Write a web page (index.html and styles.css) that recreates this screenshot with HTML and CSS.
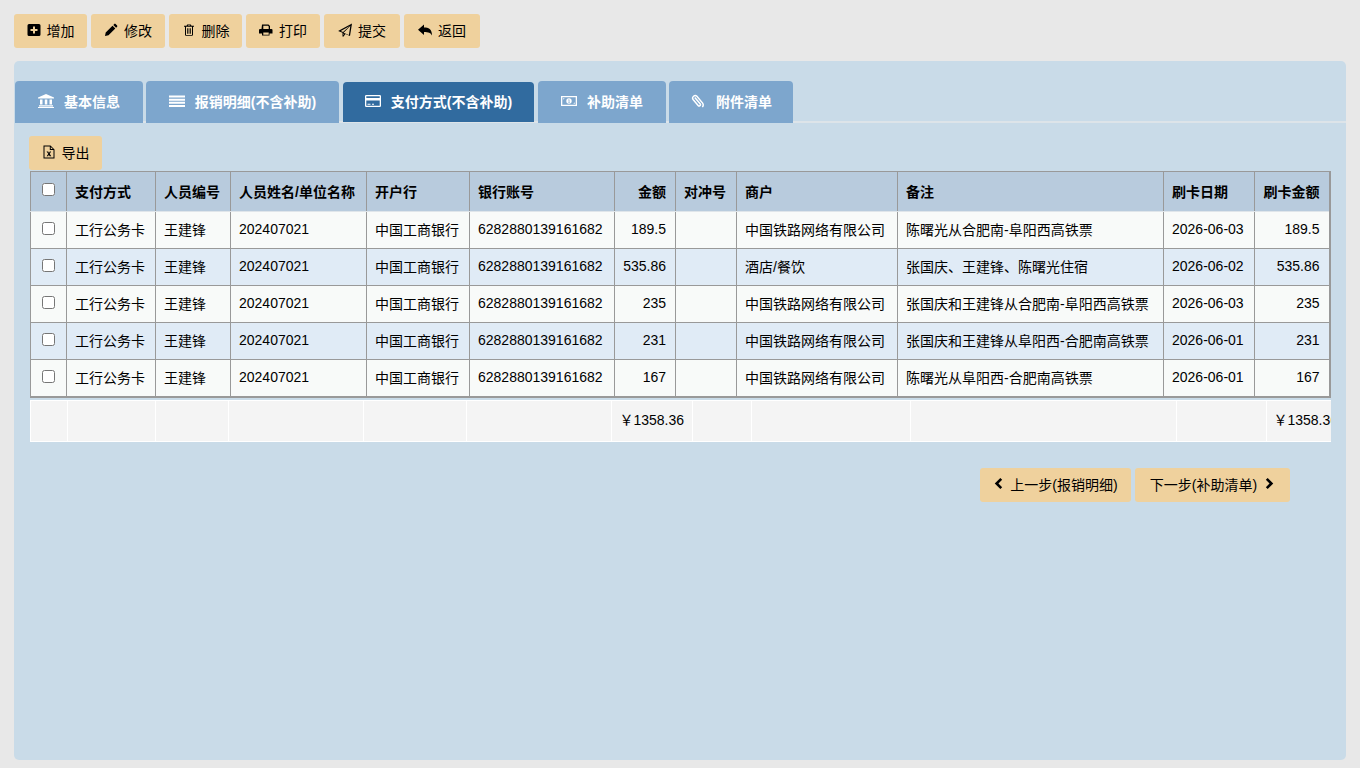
FILE: index.html
```html
<!DOCTYPE html>
<html lang="zh-CN">
<head>
    <meta charset="UTF-8">
    <title>支付方式</title>
    <link rel="stylesheet" href="styles.css">
</head>
<body>
    <!-- Toolbar -->
    <div class="toolbar">
        <button class="btn"><svg class="icon" viewBox="0 0 14 14"><path d="M2 1h10a1.500 1.500 0 0 1 1.500 1.500v9a1.500 1.500 0 0 1-1.500 1.500h-10a1.500 1.500 0 0 1-1.500-1.500v-9a1.500 1.500 0 0 1 1.500-1.500zM6 3.500v2.500h-2.500v2h2.500v2.500h2v-2.500h2.500v-2h-2.500v-2.500z" fill-rule="evenodd"/></svg>增加</button>
        <button class="btn"><svg class="icon" viewBox="0 0 14 14"><path d="M1 13l.7-3.500 6.800-6.800 2.800 2.800-6.800 6.800zM9.300 1.900l1-1a1 1 0 0 1 1.300 0l1.500 1.500a1 1 0 0 1 0 1.300l-1 1z"/></svg>修改</button>
        <button class="btn"><svg class="icon" viewBox="0 0 14 14"><path d="M5.200 1.500h3.600l.7 1.300h2.500v1h-1v8a1 1 0 0 1-1 1h-6a1 1 0 0 1-1-1v-8h-1v-1h2.500zM6 2.300l-.2.500h2.400l-.2-.5zM4 3.800v8.300h6v-8.300zM5 5.300h.8v5.500h-.8zM6.600 5.300h.8v5.500h-.8zM8.200 5.300h.8v5.500h-.8z" fill-rule="evenodd"/></svg>删除</button>
        <button class="btn"><svg class="icon" viewBox="0 0 14 14"><path d="M3 1.500h6.500l1.500 1.500v3h1.500a1 1 0 0 1 1 1v3.500h-3v2h-7.500v-2h-3v-3.500a1 1 0 0 1 1-1h1.500zM4.300 2.800v3.200h5.400v-2.500l-.7-.7zM4.300 9.500v2.200h5.400v-2.200z" fill-rule="evenodd"/></svg>打印</button>
        <button class="btn"><svg class="icon" viewBox="0 0 14 14"><path d="M14 .5l-2 12.500-4.500-1.900-2.200 2.600-.8-.2v-3.700l-4.400-1.900zM11.800 3l-9 5 2.200 1zM12.300 3l-6.700 6.800 5.300 2.200zM5.300 10.700v1.300l.9-1z" fill-rule="evenodd"/></svg>提交</button>
        <button class="btn"><svg class="icon" viewBox="0 0 14 14"><path d="M6 1.500v3c4.500 0 8 1.500 8 8-1.200-2.800-3.500-3.600-8-3.600v3.100l-6-5.200z"/></svg>返回</button>
    </div>

    <div class="panel">
        <!-- Tabs -->
        <div class="tabs">
            <div class="tab tab-a"><svg class="icon tab-icon" viewBox="0 0 16 14"><path d="M8 0l8 3.500v1h-16v-1zM2 5.500h2.500v5h-2.500zM6.800 5.500h2.500v5h-2.500zM11.500 5.500h2.500v5h-2.500zM1 11.200h14v1.300h-14zM0 13h16v1h-16z"/></svg>基本信息</div>
            <div class="tab tab-b"><svg class="icon tab-icon" viewBox="0 0 16 14"><path d="M0 1.500h16v2h-16zM0 4.700h16v2h-16zM0 7.800h16v2h-16zM0 11h16v2h-16z"/></svg>报销明细(不含补助)</div>
            <div class="tab tab-c active"><svg class="icon tab-icon" viewBox="0 0 16 14"><path d="M1.300 1h13.400a1.300 1.300 0 0 1 1.300 1.300v9.400a1.300 1.300 0 0 1-1.300 1.300h-13.400a1.300 1.300 0 0 1-1.300-1.300v-9.400a1.300 1.300 0 0 1 1.300-1.300zM1.300 2.300v1.700h13.400v-1.700zM1.300 6.500v5.200h13.400v-5.200zM2.500 9.700h3v1h-3zM7 9.700h2v1h-2z" fill-rule="evenodd"/></svg>支付方式(不含补助)</div>
            <div class="tab tab-d"><svg class="icon tab-icon" viewBox="0 0 16 14"><path d="M0 2h16v10h-16zM1.300 3.300v7.400h13.400v-7.400zM8 4.300a2.700 2.700 0 1 1 0 5.400a2.700 2.700 0 1 1 0-5.400zM7.300 5.500v.7h.4v2h-.5v.6h1.700v-.6h-.5v-2.700zM2.200 4.200h1.500l-1.500 1.500zM13.800 9.800h-1.500l1.500-1.500z" fill-rule="evenodd"/></svg>补助清单</div>
            <div class="tab tab-e"><svg class="icon tab-icon clip" viewBox="0 0 14 14"><path d="M3.800 3.500l5.300 6.300a1.300 1.300 0 0 1-2 1.700l-5-6a2.500 2.500 0 0 1 3.800-3.200l5.700 6.800a3.400 3.400 0 0 1-.2 4"/></svg>附件清单</div>
        </div>

        <button class="btn btn-export"><svg class="icon" viewBox="0 0 14 14"><path d="M1.500 .5h7l4 4v9h-11zM2.500 1.500v11h9v-7.500h-3.700v-3.500zM8.800 2v2h2z" fill-rule="evenodd"/><path d="M4.500 6.500h1.700l.8 1.400.8-1.400h1.400l-1.500 2.200 1.600 2.500h-1.700l-.7-1.400-.8 1.400h-1.400l1.600-2.500z"/></svg>导出</button>

        <!-- Data table -->
        <table class="grid">
            <colgroup>
                <col class="c1"><col class="c2"><col class="c3"><col class="c4"><col class="c5"><col class="c6">
                <col class="c7"><col class="c8"><col class="c9"><col class="c10"><col class="c11"><col class="c12">
            </colgroup>
            <thead>
                <tr>
                    <th class="center"><input type="checkbox"></th>
                    <th>支付方式</th><th>人员编号</th><th>人员姓名/单位名称</th><th>开户行</th><th>银行账号</th>
                    <th class="num">金额</th><th>对冲号</th><th>商户</th><th>备注</th><th>刷卡日期</th><th class="num">刷卡金额</th>
                </tr>
            </thead>
            <tbody>
                <tr>
                    <td class="center"><input type="checkbox"></td>
                    <td>工行公务卡</td><td>王建锋</td><td>202407021</td><td>中国工商银行</td><td>6282880139161682</td>
                    <td class="num">189.5</td><td></td><td>中国铁路网络有限公司</td><td>陈曙光从合肥南-阜阳西高铁票</td><td>2026-06-03</td><td class="num">189.5</td>
                </tr>
                <tr>
                    <td class="center"><input type="checkbox"></td>
                    <td>工行公务卡</td><td>王建锋</td><td>202407021</td><td>中国工商银行</td><td>6282880139161682</td>
                    <td class="num">535.86</td><td></td><td>酒店/餐饮</td><td>张国庆、王建锋、陈曙光住宿</td><td>2026-06-02</td><td class="num">535.86</td>
                </tr>
                <tr>
                    <td class="center"><input type="checkbox"></td>
                    <td>工行公务卡</td><td>王建锋</td><td>202407021</td><td>中国工商银行</td><td>6282880139161682</td>
                    <td class="num">235</td><td></td><td>中国铁路网络有限公司</td><td>张国庆和王建锋从合肥南-阜阳西高铁票</td><td>2026-06-03</td><td class="num">235</td>
                </tr>
                <tr>
                    <td class="center"><input type="checkbox"></td>
                    <td>工行公务卡</td><td>王建锋</td><td>202407021</td><td>中国工商银行</td><td>6282880139161682</td>
                    <td class="num">231</td><td></td><td>中国铁路网络有限公司</td><td>张国庆和王建锋从阜阳西-合肥南高铁票</td><td>2026-06-01</td><td class="num">231</td>
                </tr>
                <tr>
                    <td class="center"><input type="checkbox"></td>
                    <td>工行公务卡</td><td>王建锋</td><td>202407021</td><td>中国工商银行</td><td>6282880139161682</td>
                    <td class="num">167</td><td></td><td>中国铁路网络有限公司</td><td>陈曙光从阜阳西-合肥南高铁票</td><td>2026-06-01</td><td class="num">167</td>
                </tr>
            </tbody>
        </table>

        <!-- Totals row, its last cell is cut off like the scrolling footer -->
        <div class="totals-wrap">
            <div class="totals">
                <div class="t1"></div><div class="t2"></div><div class="t3"></div><div class="t4"></div><div class="t5"></div><div class="t6"></div>
                <div class="t7">￥1358.36</div><div class="t8"></div><div class="t9"></div><div class="t10"></div><div class="t11"></div>
                <div class="t12">￥1358.36</div>
            </div>
        </div>

        <!-- Step buttons -->
        <div class="steps">
            <button class="btn btn-prev"><svg class="icon chev" viewBox="0 0 10 14"><path d="M7.500 1l2 2-4 4 4 4-2 2-6-6z"/></svg>上一步(报销明细)</button>
            <button class="btn btn-next">下一步(补助清单)<svg class="icon chev chev-r" viewBox="0 0 10 14"><path d="M2.500 1l-2 2 4 4-4 4 2 2 6-6z"/></svg></button>
        </div>
    </div>
</body>
</html>
```

FILE: styles.css
```css
* {
    box-sizing: border-box;
}
html, body {
    height: 100%;
}
body {
    margin: 0;
    padding: 14px 14px 8px;
    background-color: #e8e8e8;
    font-family: "Liberation Sans", "Noto Sans CJK SC", sans-serif;
    font-size: 14px;
    color: #000;
    overflow: hidden;
}

/* Buttons */
.toolbar {
    display: flex;
    gap: 4px;
    height: 34px;
    margin-bottom: 13px;
}
.btn {
    display: inline-flex;
    align-items: center;
    justify-content: center;
    height: 34px;
    padding: 0 0 2px;
    border: none;
    border-radius: 3px;
    background-color: #efd19d;
    font: inherit;
    color: #000;
}
.toolbar .btn:nth-child(1) { width: 73px; }
.toolbar .btn:nth-child(2) { width: 74px; }
.toolbar .btn:nth-child(3) { width: 73px; }
.toolbar .btn:nth-child(4) { width: 74px; }
.toolbar .btn:nth-child(5) { width: 76px; }
.toolbar .btn:nth-child(6) { width: 76px; }
.icon {
    width: 14px;
    height: 14px;
    margin-right: 6px;
    fill: #000;
    flex: none;
}

/* Panel and tabs */
.panel {
    height: 699px;
    padding: 20px 16px 0 1px;
    background-color: #c9dbe8;
    border-radius: 5px;
}
.tabs {
    display: flex;
    align-items: flex-start;
    height: 42px;
    border-bottom: 2px solid #dde4e9;
    margin-right: -16px;
}
.tab {
    display: flex;
    align-items: center;
    justify-content: center;
    height: 42px;
    padding-bottom: 3px;
    background-color: #7da6cd;
    border-radius: 4px 4px 0 0;
    color: #fff;
    font-weight: bold;
    flex: none;
}
.tab-icon {
    width: 16px;
    height: 14px;
    margin-right: 10px;
    fill: #fff;
}
.tab-a { width: 128px; margin-right: 3px; }
.tab-b { width: 193px; margin-right: 4px; }
.tab-c { width: 191px; margin-right: 4px; }
.tab-d { width: 128px; margin-right: 3px; }
.tab-e { width: 124px; }
.tab.active {
    height: 40px;
    margin-top: 1px;
    padding-bottom: 2px;
    background-color: #316b9f;
}
.clip {
    fill: none;
    stroke: #fff;
    stroke-width: 1.500;
}
.btn-export {
    display: flex;
    width: 73px;
    margin: 13px 0 0 14px;
}

/* Data table */
.grid {
    width: 1299px;
    margin: 1px 0 0 15px;
    table-layout: fixed;
    border-collapse: collapse;
    border: 2px solid #999;
    border-width: 1px 2px 2px 1px;
}
.c1 { width: 36px; }
.c2 { width: 89px; }
.c3 { width: 75px; }
.c4 { width: 136px; }
.c5 { width: 103px; }
.c6 { width: 145px; }
.c7 { width: 61px; }
.c8 { width: 61px; }
.c9 { width: 161px; }
.c10 { width: 266px; }
.c11 { width: 91px; }
.c12 { width: 75px; }
.grid th, .grid td {
    padding: 0 8px 2px;
    border: 1px solid #999;
    text-align: left;
    white-space: nowrap;
    overflow: hidden;
}
.grid th {
    height: 40px;
    background-color: #b8cbdd;
    border-bottom-color: #dfe5ea;
}
.grid td {
    height: 37px;
    background-color: #f8faf9;
}
.grid tbody tr:nth-child(even) td {
    background-color: #e0ebf6;
}
.grid .num {
    text-align: right;
    padding-right: 9px;
}
.grid .center {
    padding: 0 0 6px;
    text-align: center;
}
.grid input {
    width: 13px;
    height: 13px;
    margin: 0;
    vertical-align: middle;
}

/* Totals row */
.totals-wrap {
    width: 1301px;
    margin: 2px 0 0 15px;
    overflow: hidden;
    border-top: 1px solid #fff;
    border-bottom: 1px solid #fff;
    border-left: 1px solid #fff;
}
.totals {
    display: flex;
    height: 40px;
    width: 1340px;
    background-color: #f4f4f4;
}
.totals div {
    flex: none;
    height: 40px;
    line-height: 38px;
    border-right: 1px solid #fff;
    text-align: right;
    padding-right: 8px;
    white-space: nowrap;
}
.t1 { width: 37px; }
.t2 { width: 88px; }
.t3 { width: 73px; }
.t4 { width: 135px; }
.t5 { width: 103px; }
.t6 { width: 145px; }
.t7 { width: 81px; }
.t8 { width: 59px; }
.t9 { width: 159px; }
.t10 { width: 266px; }
.t11 { width: 90px; }
.t12 { width: 80px; }

/* Step buttons */
.steps {
    display: flex;
    gap: 4px;
    margin: 26px 0 0 965px;
}
.btn-prev { width: 151px; }
.btn-next { width: 155px; }
.chev {
    width: 10px;
    height: 13px;
    margin-right: 7px;
}
.chev-r {
    margin: 0 0 0 8px;
}
```
